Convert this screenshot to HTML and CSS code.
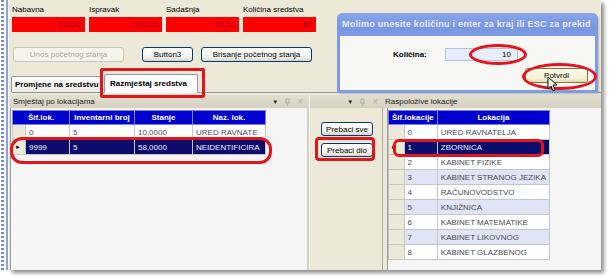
FILE: index.html
```html
<!DOCTYPE html>
<html lang="hr">
<head>
    <meta charset="UTF-8">
    <title>Razmještaj sredstva</title>
    <link rel="stylesheet" href="styles.css">
</head>
<body>

<div class="desk">
    <div class="edge"></div>
    <div class="window">
        <div class="fields">
            <div class="field"><span class="cap">Nabavna</span><span class="value">400,00</span></div>
            <div class="field"><span class="cap">Ispravak</span><span class="value">350,00</span></div>
            <div class="field"><span class="cap">Sadašnja</span><span class="value">50,00</span></div>
            <div class="field"><span class="cap">Količina sredstva</span><span class="value">58</span></div>
        </div>

        <div class="actions">
            <button class="btn btn-unos" disabled>Unos početnog stanja</button>
            <button class="btn btn-b3">Button3</button>
            <button class="btn btn-bris">Brisanje početnog stanja</button>
        </div>

        <div class="tabs">
            <div class="tab">Promjene na sredstvu</div>
            <div class="tab active">Razmještaj sredstva</div>
        </div>

        <div class="panes">
            <section class="pane pane-left">
                <div class="pane-head">
                    <span class="title">Smještaj po lokacijama</span>
                    <span class="tools">
                        <span class="drop">&#9660;</span>
                        <svg class="pin" width="7" height="8" viewBox="0 0 7 8"><path d="M2 1h3v4H2zM1 5h5M3.5 5v3" fill="none" stroke="#b8b4a6"/></svg>
                        <span class="close">&#215;</span>
                    </span>
                </div>
                <div class="pane-body">
                    <table class="grid">
                        <colgroup><col style="width:13px"><col style="width:44px"><col style="width:65px"><col style="width:58px"><col style="width:73px"></colgroup>
                        <tr><th colspan="2">Šif.lok.</th><th>Inventarni broj</th><th>Stanje</th><th>Naz. lok.</th></tr>
                        <tr><td class="ind"></td><td>0</td><td>5</td><td>10,0000</td><td>URED RAVNATE</td></tr>
                        <tr class="sel"><td class="ind">&#9658;</td><td>9999</td><td>5</td><td>58,0000</td><td>NEIDENTIFICIRA</td></tr>
                    </table>
                </div>
            </section>

            <section class="pane pane-mid">
                <div class="pane-head">
                    <span class="tools">
                        <span class="drop">&#9660;</span>
                        <svg class="pin" width="7" height="8" viewBox="0 0 7 8"><path d="M2 1h3v4H2zM1 5h5M3.5 5v3" fill="none" stroke="#b8b4a6"/></svg>
                        <span class="close">&#215;</span>
                    </span>
                </div>
                <div class="pane-body">
                    <button class="btn btn-move">Prebaci sve</button>
                    <button class="btn btn-move">Prebaci dio</button>
                </div>
            </section>

            <section class="pane pane-right">
                <div class="pane-head"><span class="title">Raspoložive lokacije</span></div>
                <div class="pane-body">
                    <table class="grid">
                        <colgroup><col style="width:14px"><col style="width:30px"><col style="width:112px"></colgroup>
                        <tr><th colspan="2">Šif.lokacije</th><th>Lokacija</th></tr>
                        <tr><td class="ind"></td><td>0</td><td>URED RAVNATELJA</td></tr>
                        <tr class="sel"><td class="ind">&#9658;</td><td>1</td><td>ZBORNICA</td></tr>
                        <tr><td class="ind"></td><td>2</td><td>KABINET FIZIKE</td></tr>
                        <tr class="alt"><td class="ind"></td><td>3</td><td>KABINET STRANOG JEZIKA</td></tr>
                        <tr><td class="ind"></td><td>4</td><td>RAČUNOVODSTVO</td></tr>
                        <tr class="alt"><td class="ind"></td><td>5</td><td>KNJIŽNICA</td></tr>
                        <tr><td class="ind"></td><td>6</td><td>KABINET MATEMATIKE</td></tr>
                        <tr class="alt"><td class="ind"></td><td>7</td><td>KABINET LIKOVNOG</td></tr>
                        <tr><td class="ind"></td><td>8</td><td>KABINET GLAZBENOG</td></tr>
                    </table>
                </div>
            </section>
        </div>
    </div>
</div>

<div class="dialog">
    <div class="dialog-title">Molimo unesite količinu i enter za kraj ili ESC za prekid</div>
    <div class="dialog-body">
        <div class="qty-row">
            <span class="qty-label">Količina:</span>
            <span class="qty-input">10</span>
        </div>
        <div class="ok-row"><button class="btn btn-ok">Potvrdi</button></div>
    </div>
</div>

<!-- red annotation marks -->
<div class="mark mark-tab"></div>
<div class="mark mark-row-left"></div>
<div class="mark mark-move"></div>
<div class="mark mark-row-right"></div>
<div class="mark mark-qty"></div>
<div class="mark mark-ok"></div>

<svg class="cursor" width="11" height="16" viewBox="0 0 11 16">
    <path d="M1 1v12l3-3 2 5 2-1-2-5h4z" fill="#fff" stroke="#000" stroke-width="1" stroke-linejoin="round"/>
</svg>

</body>
</html>
```

FILE: styles.css
```css
* {
    box-sizing: border-box;
}
body {
    margin: 0;
    width: 613px;
    height: 278px;
    overflow: hidden;
    position: relative;
    background: #fff;
    font-family: "Liberation Sans", Arial, sans-serif;
    font-size: 8px;
    color: #000;
}
.desk {
    display: flex;
    height: 270px;
}
.edge {
    width: 9px;
    background:
        repeating-linear-gradient(to bottom, #7488d8 0 2px, transparent 2px 4px) 1px 0 / 3px 100% no-repeat,
        linear-gradient(#8fa2e4, #8fa2e4) 6px 0 / 2px 100% no-repeat,
        #fff;
}
.window {
    width: 592px;
    height: 270px;
    background: #ece9d8;
    box-shadow: 3px 3px 4px rgba(0, 0, 0, .45);
    display: flex;
    flex-direction: column;
    padding-left: 3px;
}

/* top fields */
.fields {
    display: flex;
    padding-top: 4px;
}
.field {
    display: flex;
    flex-direction: column;
    width: 73px;
    margin-right: 4px;
}
.cap {
    height: 13px;
    line-height: 12px;
}
.value {
    height: 15px;
    line-height: 15px;
    background: #ff0000;
    color: #9e0028;
    text-align: right;
    padding-right: 4px;
}

/* buttons */
.btn {
    font-family: inherit;
    font-size: 8px;
    height: 15px;
    padding: 0;
    color: #000;
    border: 1px solid #003c74;
    border-radius: 3px;
    background: linear-gradient(#fff, #f2f1ec 70%, #d9d4c7);
}
.btn:disabled {
    color: #aca899;
    border-color: #c9c7ba;
    background: #f5f4ea;
}
.actions {
    display: flex;
    margin-top: 15px;
}
.btn-unos {
    width: 111px;
    margin-left: 1px;
}
.btn-b3 {
    width: 51px;
    margin-left: 18px;
}
.btn-bris {
    width: 111px;
    margin-left: 8px;
}

/* tabs */
.tabs {
    display: flex;
    align-items: flex-end;
    height: 18px;
    margin-top: 13px;
    border-bottom: 1px solid #919b9c;
}
.tab {
    height: 16px;
    line-height: 15px;
    width: 90px;
    padding-left: 3px;
    font-weight: bold;
    white-space: nowrap;
    overflow: hidden;
    border: 1px solid #919b9c;
    border-bottom: none;
    border-radius: 2px 2px 0 0;
    background: linear-gradient(#fff, #ecebe5);
}
.tab:first-child {
    margin-left: -1px;
}
.tab.active {
    width: 94px;
    height: 19px;
    line-height: 17px;
    margin-left: 3px;
    margin-bottom: -1px;
    padding-left: 5px;
    background: #fcfcfe;
}

/* docked panes */
.panes {
    flex: 1;
    display: flex;
    margin-left: -2px;
}
.pane {
    display: flex;
    flex-direction: column;
}
.pane-left {
    width: 299px;
}
.pane-mid {
    width: 74px;
}
.pane-right {
    width: 218px;
}
.pane-head {
    display: flex;
    align-items: center;
    height: 13px;
    margin-top: 2px;
    padding-left: 3px;
    background: linear-gradient(#e3dfcf, #d6d2c1);
    color: #222;
}
.title {
    flex: 1;
    white-space: nowrap;
}
.tools {
    display: flex;
    align-items: center;
    gap: 6px;
    margin-left: auto;
    padding-right: 6px;
}
.drop {
    font-size: 6px;
}
.close {
    color: #b8b4a6;
    font-size: 10px;
    line-height: 8px;
}
.pane-mid .pane-head {
    border-left: 1px solid #f4f3ee;
    padding-left: 0;
}
.pane-mid .tools {
    padding-right: 5px;
}
.pane-body {
    flex: 1;
}
.pane-left .pane-body {
    background: #f5f5f5;
    border-left: 1px solid #9a9a9a;
    border-right: 2px solid #d4d0c0;
    padding: 2px 0 0 1px;
}
.pane-mid .pane-body {
    display: flex;
    flex-direction: column;
    align-items: flex-start;
    gap: 7px;
    padding: 14px 0 0 11px;
    border-left: 1px solid #fff;
    border-right: 1px solid #aca899;
}
.btn-move {
    width: 52px;
    height: 14px;
}
.pane-right .pane-head {
    padding-left: 2px;
}
.pane-right .pane-body {
    margin-left: 4px;
    background: #f5f5f5;
    border-left: 1px solid #9a9a9a;
    padding-top: 2px;
}

/* data grids */
.grid {
    border-collapse: collapse;
    table-layout: fixed;
    font-size: 8px;
}
.grid th,
.grid td {
    height: 15px;
    padding: 0 3px;
    border: 1px solid #c6c6c6;
    white-space: nowrap;
    overflow: hidden;
    text-align: left;
    background: #fff;
    color: #4a4a5a;
}
.grid th {
    height: 14px;
    background: #0000cd;
    color: #fff;
    font-weight: bold;
    text-align: center;
    border-color: #8080e8;
}
.grid td.ind {
    background: #ece9d8;
    color: #000;
    padding: 0 0 0 2px;
    font-size: 6px;
}
.grid tr.sel td {
    background: #0c0c6c;
    color: #f0f0ff;
}
.grid tr.sel td.ind {
    background: #ece9d8;
    color: #000;
}
.grid tr.alt td {
    background: #e1e4f4;
}
.grid tr.alt td.ind {
    background: #ece9d8;
}

/* modal dialog */
.dialog {
    position: absolute;
    left: 337px;
    top: 13px;
    width: 261px;
    height: 80px;
    background: #7d9ce6;
    border-radius: 6px 6px 0 0;
    display: flex;
    flex-direction: column;
    box-shadow: 1px 1px 2px rgba(0, 0, 0, .2);
}
.dialog-title {
    height: 23px;
    line-height: 23px;
    padding-left: 5px;
    color: #e6ecff;
    font-size: 9px;
    font-weight: bold;
    letter-spacing: .25px;
    white-space: nowrap;
    background: linear-gradient(#8aa6ea, #7895e2 60%, #7d9ae4);
    border-radius: 6px 6px 0 0;
}
.dialog-body {
    flex: 1;
    margin: 0 3px 3px;
    background: #f7f7f5;
    padding: 12px 7px 0 0;
}
.qty-row {
    display: flex;
    align-items: center;
    padding-left: 53px;
}
.qty-label {
    width: 52px;
    font-weight: bold;
}
.qty-input {
    width: 73px;
    height: 13px;
    line-height: 12px;
    text-align: right;
    padding-right: 6px;
    background: #e8eef9;
    border: 1px solid #b5c2dc;
}
.ok-row {
    display: flex;
    justify-content: flex-end;
    margin-top: 7px;
}
.btn-ok {
    width: 63px;
    border-color: #86733e;
    background: linear-gradient(#fffbe8, #f6f1d8 70%, #e6dcb4);
}

/* annotation marks */
.mark {
    position: absolute;
    border: 3px solid #e4141c;
}
.mark-tab {
    left: 100px;
    top: 68px;
    width: 105px;
    height: 30px;
    border-radius: 2px;
}
.mark-row-left {
    left: 10px;
    top: 137px;
    width: 262px;
    height: 27px;
    border-radius: 12px;
}
.mark-move {
    left: 315px;
    top: 137px;
    width: 60px;
    height: 24px;
    border-radius: 4px;
}
.mark-row-right {
    left: 393px;
    top: 139px;
    width: 151px;
    height: 18px;
    border-radius: 6px;
}
.mark-qty {
    left: 469px;
    top: 44px;
    width: 58px;
    height: 21px;
    border-radius: 50%;
}
.mark-ok {
    left: 522px;
    top: 63px;
    width: 75px;
    height: 27px;
    border-radius: 50%;
}
.cursor {
    position: absolute;
    left: 547px;
    top: 76px;
}
```
